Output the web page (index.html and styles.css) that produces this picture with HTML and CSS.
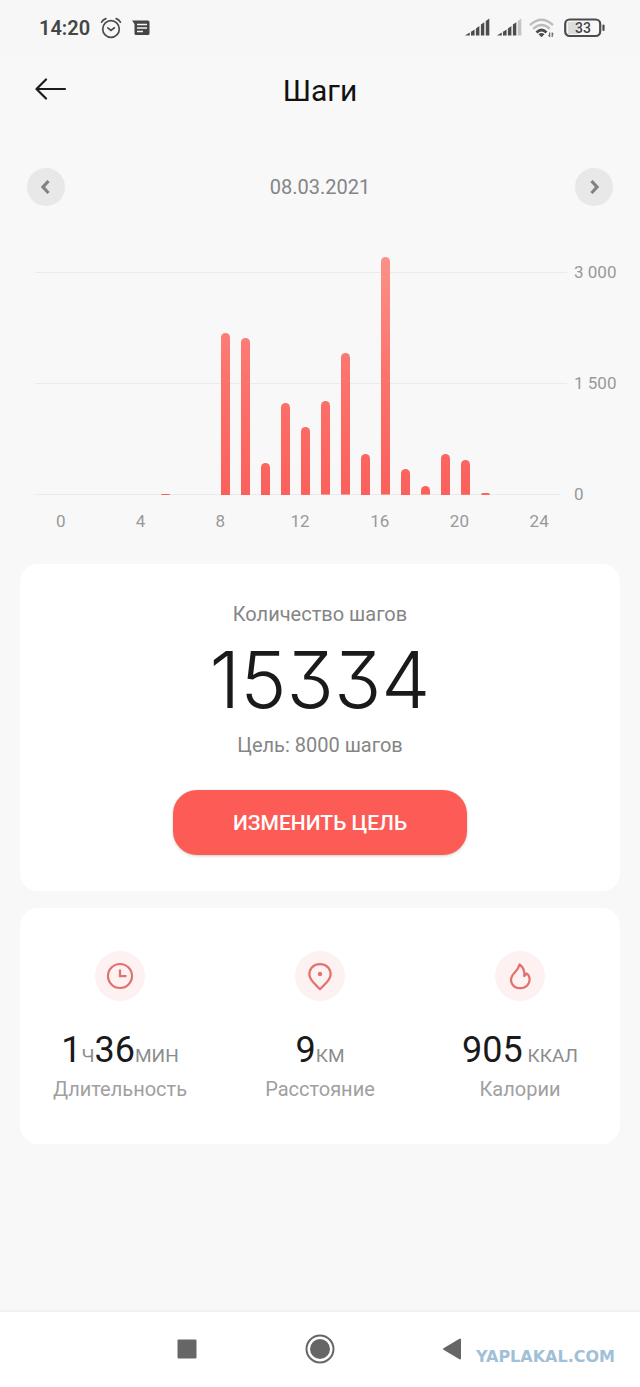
FILE: index.html
```html
<!DOCTYPE html>
<html lang="ru">
<head>
<meta charset="utf-8">
<meta name="viewport" content="width=device-width, initial-scale=1">
<title>Шаги</title>
<link rel="stylesheet" href="styles.css">
</head>
<body>
<div class="status">
  <div class="status-group">
    <span class="status-time">14:20</span>
    <svg width="22" height="22" viewBox="0 0 22 22" fill="none" stroke="#4c4c4c" stroke-width="1.7" stroke-linecap="round" aria-hidden="true">
      <circle cx="11" cy="12" r="8.3"/><path d="M7.8 10.8l3.2 2.6 3.4-2.6M1.6 5.2Q3 2.600 5.800 1.600M20.400 5.200Q19 2.600 16.200 1.600"/>
    </svg>
    <svg class="status-message" width="18" height="16" viewBox="0 0 18 16" aria-hidden="true">
      <path fill="#454545" d="M0 .500H16Q17.500 .500 17.500 2V13.500Q17.500 15 16 15H4Q2.500 15 2.500 13.500V4Z"/>
      <path stroke="#f7f7f7" stroke-width="1.500" d="M5 4.500H15M5 8H15M5 11.500H11"/>
    </svg>
  </div>
  <div class="status-group status-right">
    <svg width="26" height="20" viewBox="0 0 26 20" fill="#4c4c4c" aria-hidden="true">
      <path d="M0 17.500L4.800 14.500V17.500ZM6 13.800L9.600 11.500V17.500H6ZM10.900 10.500L14.400 8V17.500H10.900ZM15.900 6.600L19.300 4.200V17.500H15.900ZM20.800 3L24.300 .500V17.500H20.800Z"/>
    </svg>
    <svg width="26" height="20" viewBox="0 0 26 20" fill="#4c4c4c" aria-hidden="true">
      <path d="M0 17.500L4.800 14.500V17.500ZM6 13.800L9.600 11.500V17.500H6ZM10.900 10.500L14.400 8V17.500H10.900ZM15.900 6.600L19.300 4.200V17.500H15.900Z"/><path fill="#c4c4c4" d="M20.800 3L24.300 .500V17.500H20.800Z"/>
    </svg>
    <svg width="26" height="20" viewBox="0 0 26 20" fill="none" stroke-width="2.400" aria-hidden="true">
      <path stroke="#bdbdbd" d="M1 7.200Q12.500 -3.600 24 7.200M4.200 10.800Q12.500 3.200 20.800 10.800"/>
      <path stroke="#4c4c4c" stroke-width="2.800" d="M7.500 14.400Q12.500 9.600 17.500 14.400"/>
      <path fill="#4c4c4c" d="M9.500 16.200Q12.500 14 15.500 16.200L12.500 19.200Z"/>
      <path stroke="#666" stroke-width="1.200" d="M20.600 14.500V19M23.200 14.500V19M19.400 17.600H20.600M23.200 16H24.600"/>
    </svg>
    <svg class="battery" width="42" height="20" viewBox="0 0 42 20" aria-label="33%">
      <rect x="4" y="4" width="11" height="12" fill="#dcdcdc"/>
      <rect x="1.200" y="1.500" width="35" height="16.500" rx="4.500" fill="none" stroke="#4c4c4c" stroke-width="2.200"/>
      <path d="M39.500 7.500V12" stroke="#4c4c4c" stroke-width="2.200" stroke-linecap="round"/>
      <text x="19" y="14.500" text-anchor="middle">33</text>
    </svg>
  </div>
</div>

<header class="header">
  <button class="back" type="button" aria-label="Назад">
    <svg width="32" height="22" viewBox="0 0 32 22" fill="none" stroke="#1c1c1c" stroke-width="2.200" stroke-linecap="round" stroke-linejoin="round" aria-hidden="true"><path d="M30 11H2M11 1.500L1.500 11L11 20.500"/></svg>
  </button>
  <h1 class="title">Шаги</h1>
</header>

<main class="main">
  <div class="date-row">
    <button class="round" type="button" aria-label="Предыдущий день">
      <svg width="14" height="16" viewBox="0 0 14 16" fill="none" stroke="#818181" stroke-width="3.200" aria-hidden="true"><path d="M9.500 2L4 8L9.500 14"/></svg>
    </button>
    <time class="muted" datetime="2021-03-08">08.03.2021</time>
    <button class="round" type="button" aria-label="Следующий день">
      <svg width="14" height="16" viewBox="0 0 14 16" fill="none" stroke="#818181" stroke-width="3.200" aria-hidden="true"><path d="M4.500 2L10 8L4.500 14"/></svg>
    </button>
  </div>

  <section class="chart" aria-label="Шаги по часам">
    <div class="plot">
      <div class="lines">
        <div class="line"><span class="rule"></span><span class="tick">3 000</span></div>
        <div class="line"><span class="rule"></span><span class="tick">1 500</span></div>
        <div class="line line-base"><span class="rule"></span><span class="tick">0</span></div>
      </div>
      <div class="bars">
        <i></i><i></i><i></i><i></i><i></i>
        <i class="bar" style="height:.5%"></i>
        <i></i><i></i>
        <i class="bar" style="height:67.5%"></i>
        <i class="bar" style="height:65.5%"></i>
        <i class="bar" style="height:13.500%"></i>
        <i class="bar" style="height:38.500%"></i>
        <i class="bar" style="height:28.300%"></i>
        <i class="bar" style="height:39%"></i>
        <i class="bar" style="height:59%"></i>
        <i class="bar" style="height:17.100%"></i>
        <i class="bar" style="height:99%"></i>
        <i class="bar" style="height:11%"></i>
        <i class="bar" style="height:3.600%"></i>
        <i class="bar" style="height:17.200%"></i>
        <i class="bar" style="height:14.500%"></i>
        <i class="bar" style="height:.8%"></i>
        <i></i><i></i>
      </div>
    </div>
    <div class="hours"><span>0</span><span>4</span><span>8</span><span>12</span><span>16</span><span>20</span><span>24</span></div>
  </section>

  <section class="card goal">
    <p class="muted">Количество шагов</p>
    <p class="count">15334</p>
    <p class="muted">Цель: 8000 шагов</p>
    <button class="change" type="button">ИЗМЕНИТЬ ЦЕЛЬ</button>
  </section>

  <section class="card stats">
    <div class="stat">
      <span class="badge"><svg width="30" height="30" viewBox="0 0 30 30" fill="none" stroke="#e2706c" stroke-width="2.200" aria-hidden="true"><circle cx="15" cy="15" r="12"/><path d="M15 8.500V15.200H21.500"/></svg></span>
      <p class="value">1<small>Ч</small>36<small>МИН</small></p>
      <p class="name">Длительность</p>
    </div>
    <div class="stat">
      <span class="badge"><svg width="30" height="30" viewBox="0 0 30 30" fill="none" stroke="#e2706c" stroke-width="2.200" stroke-linejoin="round" aria-hidden="true"><path d="M15 28.200Q12.800 26.200 8.500 21.500C3.200 15.600 3.800 10.300 6.600 6.800C10.800 1.800 19.200 1.800 23.400 6.800C26.200 10.300 26.800 15.600 21.500 21.500Q17.200 26.200 15 28.200Z"/><circle cx="15" cy="13" r="2.200" fill="#e2706c" stroke="none"/></svg></span>
      <p class="value">9<small>КМ</small></p>
      <p class="name">Расстояние</p>
    </div>
    <div class="stat">
      <span class="badge"><svg width="30" height="30" viewBox="0 0 30 30" fill="none" stroke="#e2706c" stroke-width="2.200" stroke-linejoin="round" aria-hidden="true"><path d="M14.500 3.500C13.500 8.500 10 10.800 7.600 14.200C3.600 20.500 8 27.200 15.200 27.200C22 27.200 26.300 20.800 23.900 15Q23 13.200 21.500 12.400Q20.900 14.300 19.200 15C19.800 10 18 6 14.500 3.500Z"/></svg></span>
      <p class="value">905<small> ККАЛ</small></p>
      <p class="name">Калории</p>
    </div>
  </section>
</main>

<nav class="nav" aria-label="Система">
  <button type="button" aria-label="Недавние"><svg width="20" height="20" viewBox="0 0 20 20" aria-hidden="true"><rect x=".500" y=".500" width="19" height="19" rx="1" fill="#666"/></svg></button>
  <button type="button" aria-label="Домой"><svg width="30" height="30" viewBox="0 0 30 30" aria-hidden="true"><circle cx="15" cy="15" r="13.500" fill="none" stroke="#666" stroke-width="2"/><circle cx="15" cy="15" r="10" fill="#666"/></svg></button>
  <button type="button" aria-label="Назад"><svg width="20" height="22" viewBox="0 0 20 22" aria-hidden="true"><path d="M18 1.500V20.500L2 11Z" fill="#666" stroke="#666" stroke-width="2" stroke-linejoin="round"/></svg></button>
  <span class="watermark">YAPLAKAL.COM</span>
</nav>
</body>
</html>
```
FILE: styles.css
```css
* { box-sizing: border-box; }

body {
  margin: 0;
  min-height: 100vh;
  display: flex;
  flex-direction: column;
  background: #f8f8f8;
  color: #1a1a1a;
  font: 400 20px/24px Roboto, "Noto Sans", sans-serif;
}

button {
  margin: 0;
  padding: 0;
  border: 0;
  background: none;
  font: inherit;
  cursor: pointer;
}

svg { display: block; }
p, h1 { margin: 0; }

.status {
  display: flex;
  justify-content: space-between;
  align-items: center;
  height: 56px;
  padding: 0 34px 0 39px;
  background: #f7f7f7;
}

.status-group { display: flex; align-items: center; gap: 10px; }
.status-right { gap: 6px; }
.status-time { color: #454545; font-weight: 600; }
.battery { margin-left: 3px; font-size: 14px; font-weight: 500; fill: #454545; }

.header {
  display: grid;
  grid-template-columns: 32px 1fr 32px;
  align-items: center;
  height: 70px;
  padding: 0 35px;
}

.back { height: 26px; display: flex; }
.title { font-size: 30px; line-height: 36px; font-weight: 400; text-align: center; color: #111; }

.main { flex: 1; padding: 42px 20px 24px; }

.date-row {
  display: flex;
  justify-content: space-between;
  align-items: center;
  padding: 0 7px;
}

.round {
  width: 38px;
  height: 38px;
  border-radius: 50%;
  background: #e8e8e8;
  display: grid;
  place-items: center;
}

.muted { color: #858585; }

.chart { padding: 49px 0 0 15px; color: #999; font-size: 17px; line-height: 20px; }
.plot { display: grid; }
.lines, .bars { grid-area: 1 / 1; }

.lines {
  display: flex;
  flex-direction: column;
  justify-content: space-between;
  height: 242px;
  margin-top: 7px;
}

.line { display: flex; align-items: center; gap: 7px; }
.rule { flex: 1; height: 1px; background: #ebebeb; }
.tick { width: 46px; }
.line-base .rule { margin-right: 6px; }

.bars {
  display: grid;
  grid-template-columns: repeat(24, 1fr);
  align-items: end;
  justify-items: center;
  height: 240px;
  margin: 0 85px 0 21px;
}

.bar {
  width: 9px;
  border-radius: 5px 5px 0 0;
  background: linear-gradient(#fb9189, #fc736d 50%, #fc605b) bottom / 100% 240px;
}

.hours {
  display: grid;
  grid-template-columns: repeat(7, 1fr);
  margin: 7px 41px 0 -14px;
  text-align: center;
}

.card { background: #fff; border-radius: 18px; }

.goal {
  display: flex;
  flex-direction: column;
  align-items: center;
  margin-top: 33px;
  padding: 38px 20px 36px;
}

.count {
  margin: 12px 0 11px;
  font: 350 78px/84px Inter, Roboto, sans-serif;
  font-feature-settings: "cv09";
}

.change {
  width: 294px;
  max-width: 100%;
  height: 65px;
  margin-top: 33px;
  border-radius: 24px;
  background: #fc5b56;
  color: #fff;
  font-size: 21px;
  font-weight: 500;
  box-shadow: 0 1px 3px rgba(0, 0, 0, .2);
}

.stats {
  display: grid;
  grid-template-columns: repeat(3, 1fr);
  margin-top: 17px;
  padding: 43px 0;
}

.stat { display: flex; flex-direction: column; align-items: center; }

.badge {
  width: 50px;
  height: 50px;
  border-radius: 50%;
  background: #fdf1f1;
  display: grid;
  place-items: center;
}

.value { margin-top: 28px; font-size: 36px; line-height: 42px; }
.value small { font-size: 19px; color: #8c8c8c; }
.name { color: #a0a0a0; }

.nav {
  position: relative;
  display: flex;
  justify-content: space-between;
  align-items: center;
  height: 77px;
  padding: 0 178px 2px 177px;
  background: #fff;
  border-top: 2px solid #f0f0f0;
}

.watermark {
  position: absolute;
  right: 25px;
  bottom: 18px;
  color: #9fc0d6;
  font: 700 16px/24px "DejaVu Sans", sans-serif;
}
```
